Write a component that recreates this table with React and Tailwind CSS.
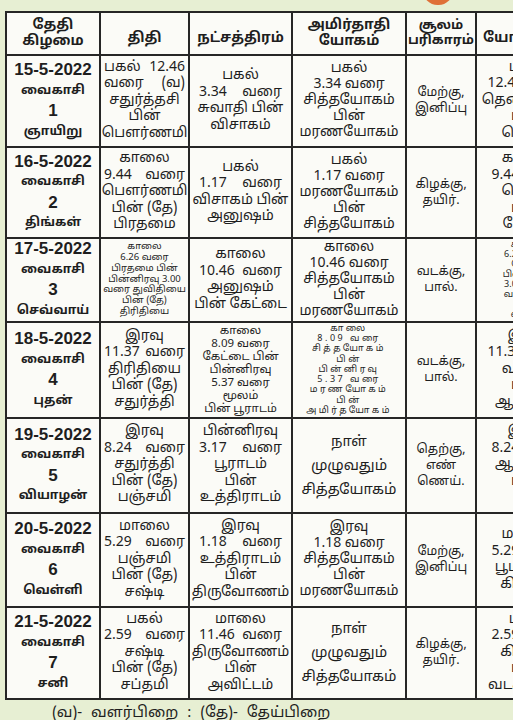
import React from "react";

const F = { fontFamily: '"Noto Sans Tamil", "Lohit Tamil", "Liberation Sans", "Noto Sans", sans-serif' };
const A = { fontFamily: '"Liberation Sans", Arial, sans-serif' };

const rows = [
  {
    d: ["15-5-2022", "வைகாசி", "1", "ஞாயிறு"],
    c2: ["~பகல் 12.46", "~வரை (வ)", "சதுர்த்தசி", "பின்", "பௌர்ணமி"],
    c3: ["பகல்", "~3.34 வரை", "சுவாதி பின்", "விசாகம்"],
    c4: ["பகல்", "3.34 வரை", "சித்தயோகம்", "பின்", "மரணயோகம்"],
    c5: ["மேற்கு,", "இனிப்பு"],
    c6: ["பகல்", "12.46 வரை", "தென்மேற்கு", "பின்", "தெற்கு"],
  },
  {
    d: ["16-5-2022", "வைகாசி", "2", "திங்கள்"],
    c2: ["காலை", "~9.44 வரை", "பௌர்ணமி", "பின் (தே)", "பிரதமை"],
    c3: ["பகல்", "~1.17 வரை", "விசாகம் பின்", "அனுஷம்"],
    c4: ["பகல்", "1.17 வரை", "மரணயோகம்", "பின்", "சித்தயோகம்"],
    c5: ["கிழக்கு,", "தயிர்."],
    c6: ["காலை", "9.44 வரை", "தெற்கு", "பின்", "மேற்கு"],
  },
  {
    d: ["17-5-2022", "வைகாசி", "3", "செவ்வாய்"],
    c2: ["காலை", "6.26 வரை", "பிரதமை பின்", "பின்னிரவு 3.00", "வரை துவிதியை", "பின் (தே)", "திரிதியை"],
    c2s: "small",
    c3: ["காலை", "~10.46 வரை", "அனுஷம்", "பின் கேட்டை"],
    c4: ["காலை", "10.46 வரை", "சித்தயோகம்", "பின்", "மரணயோகம்"],
    c5: ["வடக்கு,", "பால்."],
    c6: ["காலை", "6.26 வரை", "மேற்கு", "பின்னிரவு", "3.00 வரை", "வடமேற்கு", "பின்", "வடக்கு"],
    c6s: "small8",
  },
  {
    d: ["18-5-2022", "வைகாசி", "4", "புதன்"],
    c2: ["இரவு", "~11.37 வரை", "திரிதியை", "பின் (தே)", "சதுர்த்தி"],
    c3: ["காலை", "8.09 வரை", "கேட்டை பின்", "பின்னிரவு", "5.37 வரை", "மூலம்", "பின் பூராடம்"],
    c3s: "mid",
    c4: ["காலை", "8.09 வரை", "சித்தயோகம்", "பின்", "பின்னிரவு", "5.37 வரை", "மரணயோகம்", "பின்", "அமிர்தயோகம்"],
    c4s: "tiny",
    c5: ["வடக்கு,", "பால்."],
    c6: ["இரவு", "11.37 வரை", "வடக்கு", "பின்", "ஆகாயம்"],
  },
  {
    d: ["19-5-2022", "வைகாசி", "5", "வியாழன்"],
    c2: ["இரவு", "~8.24 வரை", "சதுர்த்தி", "பின் (தே)", "பஞ்சமி"],
    c3: ["பின்னிரவு", "~3.17 வரை", "பூராடம்", "பின்", "உத்திராடம்"],
    c4: ["நாள்", "முழுவதும்", "சித்தயோகம்"],
    c4s: "wide",
    c5: ["தெற்கு,", "எண்", "ணெய்."],
    c6: ["இரவு", "8.24 வரை", "ஆகாயம்", "பின்", "பூமி"],
  },
  {
    d: ["20-5-2022", "வைகாசி", "6", "வெள்ளி"],
    c2: ["மாலை", "~5.29 வரை", "பஞ்சமி", "பின் (தே)", "சஷ்டி"],
    c3: ["இரவு", "~1.18 வரை", "உத்திராடம்", "பின்", "திருவோணம்"],
    c4: ["இரவு", "1.18 வரை", "சித்தயோகம்", "பின்", "மரணயோகம்"],
    c5: ["மேற்கு,", "இனிப்பு"],
    c6: ["மாலை", "5.29 வரை", "பூமி பின்", "கிழக்கு"],
  },
  {
    d: ["21-5-2022", "வைகாசி", "7", "சனி"],
    c2: ["பகல்", "~2.59 வரை", "சஷ்டி", "பின் (தே)", "சப்தமி"],
    c3: ["மாலை", "~11.46 வரை", "திருவோணம்", "பின்", "அவிட்டம்"],
    c4: ["நாள்", "முழுவதும்", "சித்தயோகம்"],
    c4s: "wide",
    c5: ["கிழக்கு,", "தயிர்."],
    c6: ["பகல்", "2.59 வரை", "கிழக்கு", "பின்", "வடகிழக்கு"],
  },
];

function Line({ t, pad }) {
  if (t.startsWith("~")) {
    const words = t.slice(1).split(" ");
    return (
      <div className={`flex w-full justify-between whitespace-nowrap ${pad}`}>
        {words.map((w, i) => (
          <span key={i}>{w}</span>
        ))}
      </div>
    );
  }
  return <div className="whitespace-nowrap">{t}</div>;
}

const sizes = {
  base: "text-[14px] leading-[16.5px]",
  c3: "text-[14px] leading-[16.5px]",
  c4: "text-[14px] leading-[16px]",
  c5: "text-[12.5px] leading-[16px]",
  small: "text-[9.5px] leading-[10.8px]",
  small8: "text-[9px] leading-[10px]",
  mid: "text-[11.5px] leading-[13px]",
  tiny: "text-[9px] leading-[10.2px] tracking-[2.5px]",
  wide: "text-[14.5px] leading-[24px]",
};

function Cell({ lines, size = "base", pad = "" }) {
  return (
    <div
      className={`bg-[#fbfbf7] flex flex-col items-center justify-center text-center px-[3px] text-[#1e1e1e] overflow-hidden ${sizes[size]}`}
      style={F}
    >
      {lines.map((t, i) => (
        <Line key={i} t={t} pad={pad} />
      ))}
    </div>
  );
}

export default function App() {
  return (
    <div className="relative w-[513px] h-[720px] overflow-hidden bg-[#e7efd3]" style={F}>
      <div className="absolute left-[423px] top-[-24px] w-[30px] h-[29px] rounded-full bg-[#df7038]" />
      <div className="pt-[11px] pl-[5px]">
        <div className="grid grid-cols-[92px_87px_101px_112px_68px_100px] grid-rows-[41px_90px_89px_82px_94px_93px_92px_90px] gap-[2px] p-[2px] bg-[#262626] w-[578px]">
          <div className="bg-[#fbfbf7] flex flex-col items-center justify-center font-bold text-[14px] leading-[16px] text-[#1e1e1e]">
            <div>தேதி</div>
            <div>கிழமை</div>
          </div>
          <div className="bg-[#fbfbf7] flex items-center justify-center font-bold text-[14px] pt-[10px] text-[#1e1e1e]">திதி</div>
          <div className="bg-[#fbfbf7] flex items-center justify-center font-bold text-[14px] pt-[10px] text-[#1e1e1e]">நட்சத்திரம்</div>
          <div className="bg-[#fbfbf7] flex flex-col items-center justify-center font-bold text-[14px] leading-[16px] text-[#1e1e1e]">
            <div>அமிர்தாதி</div>
            <div>யோகம்</div>
          </div>
          <div className="bg-[#fbfbf7] flex flex-col items-center justify-center font-bold text-[13px] leading-[15px] text-[#1e1e1e]">
            <div>சூலம்</div>
            <div>பரிகாரம்</div>
          </div>
          <div className="bg-[#fbfbf7] flex items-center justify-start pl-[6px] font-bold text-[14px] pt-[10px] text-[#1e1e1e]">யோகினி</div>

          {rows.map((r, i) => (
            <React.Fragment key={i}>
              <div className="bg-[#fbfbf7] flex flex-col items-center justify-center font-bold text-[#1e1e1e] leading-[20.5px]">
                <div className="text-[17px]" style={A}>{r.d[0]}</div>
                <div className="text-[12.5px]">{r.d[1]}</div>
                <div className="text-[17px]" style={A}>{r.d[2]}</div>
                <div className="text-[12.5px]">{r.d[3]}</div>
              </div>
              <Cell lines={r.c2} size={r.c2s || "base"} />
              <Cell lines={r.c3} size={r.c3s || "c3"} pad="px-[6px]" />
              <Cell lines={r.c4} size={r.c4s || "c4"} />
              <Cell lines={r.c5} size="c5" />
              <Cell lines={r.c6} size={r.c6s || "base"} />
            </React.Fragment>
          ))}
        </div>
        <div className="pl-[47px] pt-[5px] text-[15px] leading-[18px] text-[#1e1e1e] whitespace-nowrap [word-spacing:5px]">
          (வ)- வளர்பிறை : (தே)- தேய்பிறை
        </div>
      </div>
    </div>
  );
}
